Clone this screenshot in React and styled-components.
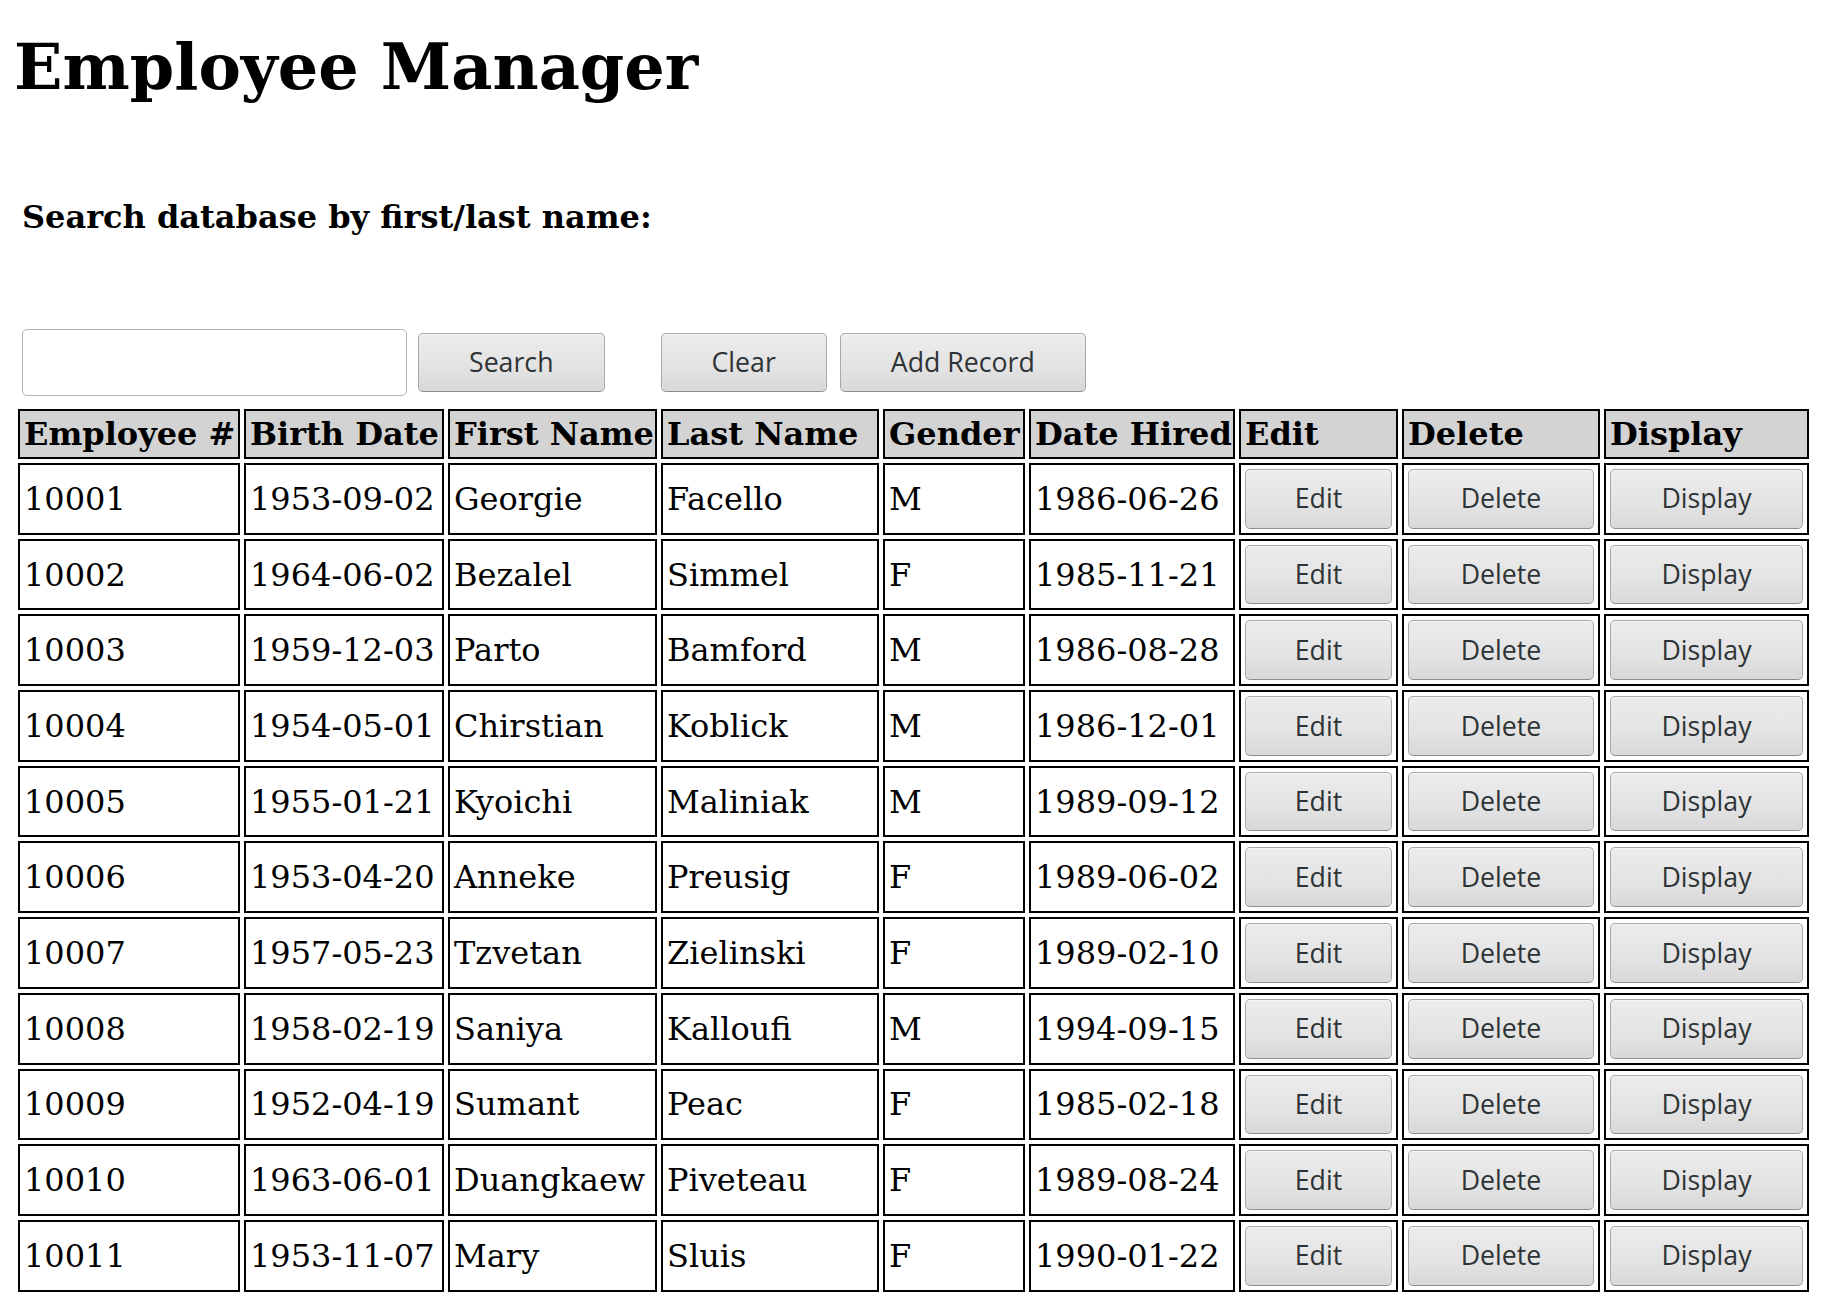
import React from 'react';
import styled, { createGlobalStyle } from 'styled-components';

const GlobalStyle = createGlobalStyle`
  html, body {
    margin: 0;
    padding: 0;
    background: #ffffff;
  }
  body {
    font-family: 'DejaVu Serif', serif;
    font-size: 32px;
    color: #000000;
  }
`;

const Page = styled.div`
  padding: 29px 0 0 14px;
`;

const Title = styled.h1`
  margin: 0;
  font-size: 63.6px;
  font-weight: bold;
  line-height: normal;
`;

const SearchLabel = styled.h4`
  margin: 94px 0 0 8px;
  font-size: 32px;
  font-weight: bold;
  line-height: normal;
`;

const Controls = styled.form`
  display: flex;
  align-items: center;
  margin: 93px 0 0 8px;
`;

const SearchInput = styled.input`
  box-sizing: border-box;
  width: 385px;
  height: 67px;
  border: 1px solid #b3b3b3;
  border-radius: 5px;
  background: #ffffff;
  font-family: 'Open Sans', sans-serif;
  font-size: 26.7px;
  padding: 0 8px;
  outline: none;
`;

const Button = styled.button`
  box-sizing: border-box;
  height: ${(p) => p.$height || '59px'};
  width: ${(p) => (p.$fill ? '100%' : 'auto')};
  margin-left: ${(p) => p.$gap || 0}px;
  padding: 0 ${(p) => (p.$fill ? 0 : 50)}px;
  border: 1px solid #a9a9a9;
  border-bottom-color: #8e8e8e;
  border-radius: 5px;
  background: linear-gradient(to bottom, #ececec 0%, #e3e3e3 60%, #d8d8d8 100%);
  box-shadow: inset 0 1px 0 #f6f6f6;
  color: #2e3436;
  font-family: 'Open Sans', sans-serif;
  font-size: 26.7px;
  line-height: 1;
  cursor: pointer;
`;

const Table = styled.table`
  table-layout: fixed;
  width: 1799px;
  margin-top: 9px;
  border-collapse: separate;
  border-spacing: 4px;
`;

const HeadCell = styled.th`
  box-sizing: border-box;
  width: ${(p) => p.$w}px;
  padding: 4px;
  border: 2px solid #000000;
  background: #d3d3d3;
  font-weight: bold;
  text-align: left;
  white-space: nowrap;
  overflow: hidden;
`;

const Cell = styled.td`
  box-sizing: border-box;
  padding: 4px;
  border: 2px solid #000000;
  background: #ffffff;
  text-align: left;
  vertical-align: middle;
  white-space: nowrap;
  overflow: hidden;
`;

const columns = [
  { label: 'Employee #', w: 222 },
  { label: 'Birth Date', w: 200 },
  { label: 'First Name', w: 209 },
  { label: 'Last Name', w: 218 },
  { label: 'Gender', w: 142 },
  { label: 'Date Hired', w: 206 },
  { label: 'Edit', w: 159 },
  { label: 'Delete', w: 198 },
  { label: 'Display', w: 205 },
];

const employees = [
  ['10001', '1953-09-02', 'Georgie', 'Facello', 'M', '1986-06-26'],
  ['10002', '1964-06-02', 'Bezalel', 'Simmel', 'F', '1985-11-21'],
  ['10003', '1959-12-03', 'Parto', 'Bamford', 'M', '1986-08-28'],
  ['10004', '1954-05-01', 'Chirstian', 'Koblick', 'M', '1986-12-01'],
  ['10005', '1955-01-21', 'Kyoichi', 'Maliniak', 'M', '1989-09-12'],
  ['10006', '1953-04-20', 'Anneke', 'Preusig', 'F', '1989-06-02'],
  ['10007', '1957-05-23', 'Tzvetan', 'Zielinski', 'F', '1989-02-10'],
  ['10008', '1958-02-19', 'Saniya', 'Kalloufi', 'M', '1994-09-15'],
  ['10009', '1952-04-19', 'Sumant', 'Peac', 'F', '1985-02-18'],
  ['10010', '1963-06-01', 'Duangkaew', 'Piveteau', 'F', '1989-08-24'],
  ['10011', '1953-11-07', 'Mary', 'Sluis', 'F', '1990-01-22'],
];

export default function App() {
  return (
    <Page>
      <GlobalStyle />
      <Title>Employee Manager</Title>
      <SearchLabel>Search database by first/last name:</SearchLabel>
      <Controls onSubmit={(e) => e.preventDefault()}>
        <SearchInput type='text' />
        <Button type='button' $gap={11}>Search</Button>
        <Button type='button' $gap={56}>Clear</Button>
        <Button type='button' $gap={13}>Add Record</Button>
      </Controls>
      <Table>
        <thead>
          <tr>
            {columns.map((c) => (
              <HeadCell key={c.label} $w={c.w}>{c.label}</HeadCell>
            ))}
          </tr>
        </thead>
        <tbody>
          {employees.map((row) => (
            <tr key={row[0]}>
              {row.map((value, i) => (
                <Cell key={i}>{value}</Cell>
              ))}
              <Cell>
                <Button type='button' $fill $height='59.7px'>Edit</Button>
              </Cell>
              <Cell>
                <Button type='button' $fill $height='59.7px'>Delete</Button>
              </Cell>
              <Cell>
                <Button type='button' $fill $height='59.7px'>Display</Button>
              </Cell>
            </tr>
          ))}
        </tbody>
      </Table>
    </Page>
  );
}
